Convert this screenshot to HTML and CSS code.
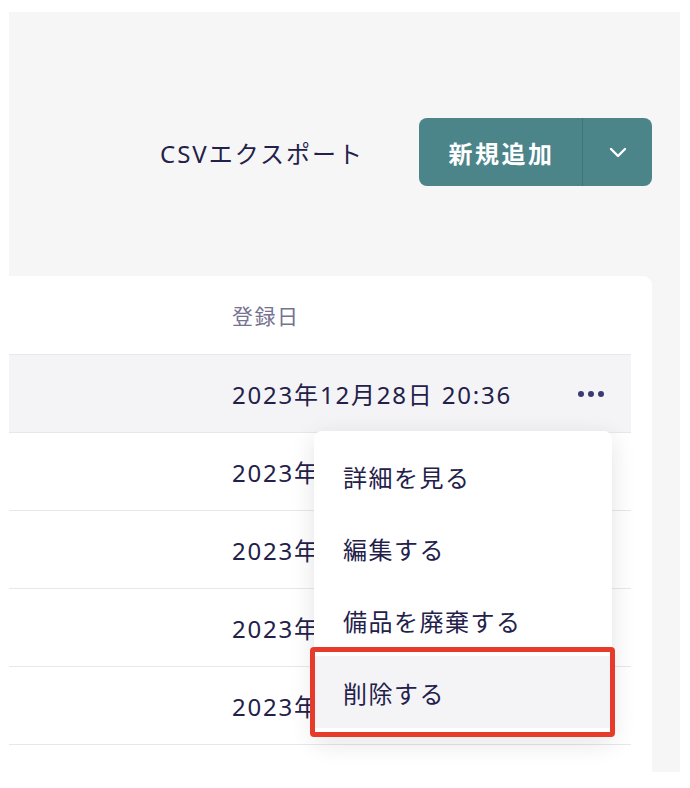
FILE: index.html
```html
<!DOCTYPE html>
<html lang="ja">
<head>
  <meta charset="UTF-8">
  <meta name="viewport" content="width=device-width, initial-scale=1.0">
  <title>備品一覧</title>
  <link rel="stylesheet" href="styles.css">
</head>
<body>
  <div class="frame">
    <div class="toolbar">
      <button class="link-btn">CSVエクスポート</button>
      <div class="split-btn">
        <button class="split-main">新規追加</button>
        <button class="split-toggle" aria-label="その他">
          <svg width="18" height="11" viewBox="0 0 18 11"><path d="M2 2l7 7 7-7" fill="none" stroke="#fff" stroke-width="2.4" stroke-linecap="round" stroke-linejoin="round"/></svg>
        </button>
      </div>
    </div>

    <div class="card">
      <div class="table">
        <div class="row head">
          <div></div>
          <div class="cell-head">登録日</div>
          <div></div>
        </div>
        <div class="row active">
          <div></div>
          <div class="cell">2023年12月28日 20:36</div>
          <div class="more"><span></span><span></span><span></span></div>
        </div>
        <div class="row">
          <div></div>
          <div class="cell">2023年12月28日 20:36</div>
          <div></div>
        </div>
        <div class="row">
          <div></div>
          <div class="cell">2023年12月28日 20:36</div>
          <div></div>
        </div>
        <div class="row">
          <div></div>
          <div class="cell">2023年12月28日 20:36</div>
          <div></div>
        </div>
        <div class="row">
          <div></div>
          <div class="cell">2023年12月28日 20:36</div>
          <div></div>
        </div>
      </div>

      <ul class="menu">
        <li>詳細を見る</li>
        <li>編集する</li>
        <li>備品を廃棄する</li>
        <li class="hover">削除する</li>
      </ul>
      <div class="highlight"></div>
    </div>
  </div>
</body>
</html>
```

FILE: styles.css
```css
* { box-sizing: border-box; }
body { margin: 0; background: #fff; font-family: "Noto Sans", "Noto Sans CJK JP", sans-serif; color: #23214a; }
button { font-family: inherit; }

.frame { margin: 12px 10px 0 9px; height: 760px; background: #f6f6f6; display: flex; flex-direction: column; padding-right: 28px; overflow: hidden; }

.toolbar { display: flex; justify-content: flex-end; align-items: center; padding-top: 106px; }
.link-btn { background: none; border: none; font-size: 24px; letter-spacing: 2px; color: #23214a; padding: 0; margin-right: 55px; }
.split-btn { display: flex; height: 68px; border-radius: 8px; overflow: hidden; background: #4b858a; }
.split-main { width: 164px; border: none; background: none; color: #fff; font-size: 24px; font-weight: bold; letter-spacing: 2.5px; padding: 0 0 0 2px; border-right: 1px solid #3f7479; }
.split-toggle { width: 69px; border: none; background: none; display: flex; align-items: center; justify-content: center; }

.card { position: relative; flex: 1; margin-top: 90px; background: #fff; border-radius: 0 9px 0 0; padding-right: 21px; }
.row { display: grid; grid-template-columns: 223px 1fr 53px; align-items: center; height: 78px; border-bottom: 1px solid #e7e7ec; }
.row.head { height: 79px; }
.row.active { background: #f4f4f6; }
.cell-head { font-size: 21px; letter-spacing: 1.5px; color: #75738f; }
.cell { font-size: 24px; letter-spacing: 1.8px; white-space: nowrap; }
.more { display: flex; gap: 4px; }
.more span { width: 6px; height: 6px; border-radius: 50%; background: #3b3a73; }

.menu { position: absolute; left: 305px; top: 155px; width: 298px; margin: 0; padding: 9px 0; list-style: none; background: #fff; border-radius: 8px; box-shadow: 0 6px 24px rgba(30, 30, 60, 0.12); }
.menu li { height: 72px; display: flex; align-items: center; padding-left: 29px; font-size: 24px; letter-spacing: 1.5px; }
.menu li.hover { background: #f4f4f6; }

.highlight { position: absolute; left: 301px; top: 371px; width: 305px; height: 90px; border: 5px solid #e63a2b; border-radius: 4px; }
```
